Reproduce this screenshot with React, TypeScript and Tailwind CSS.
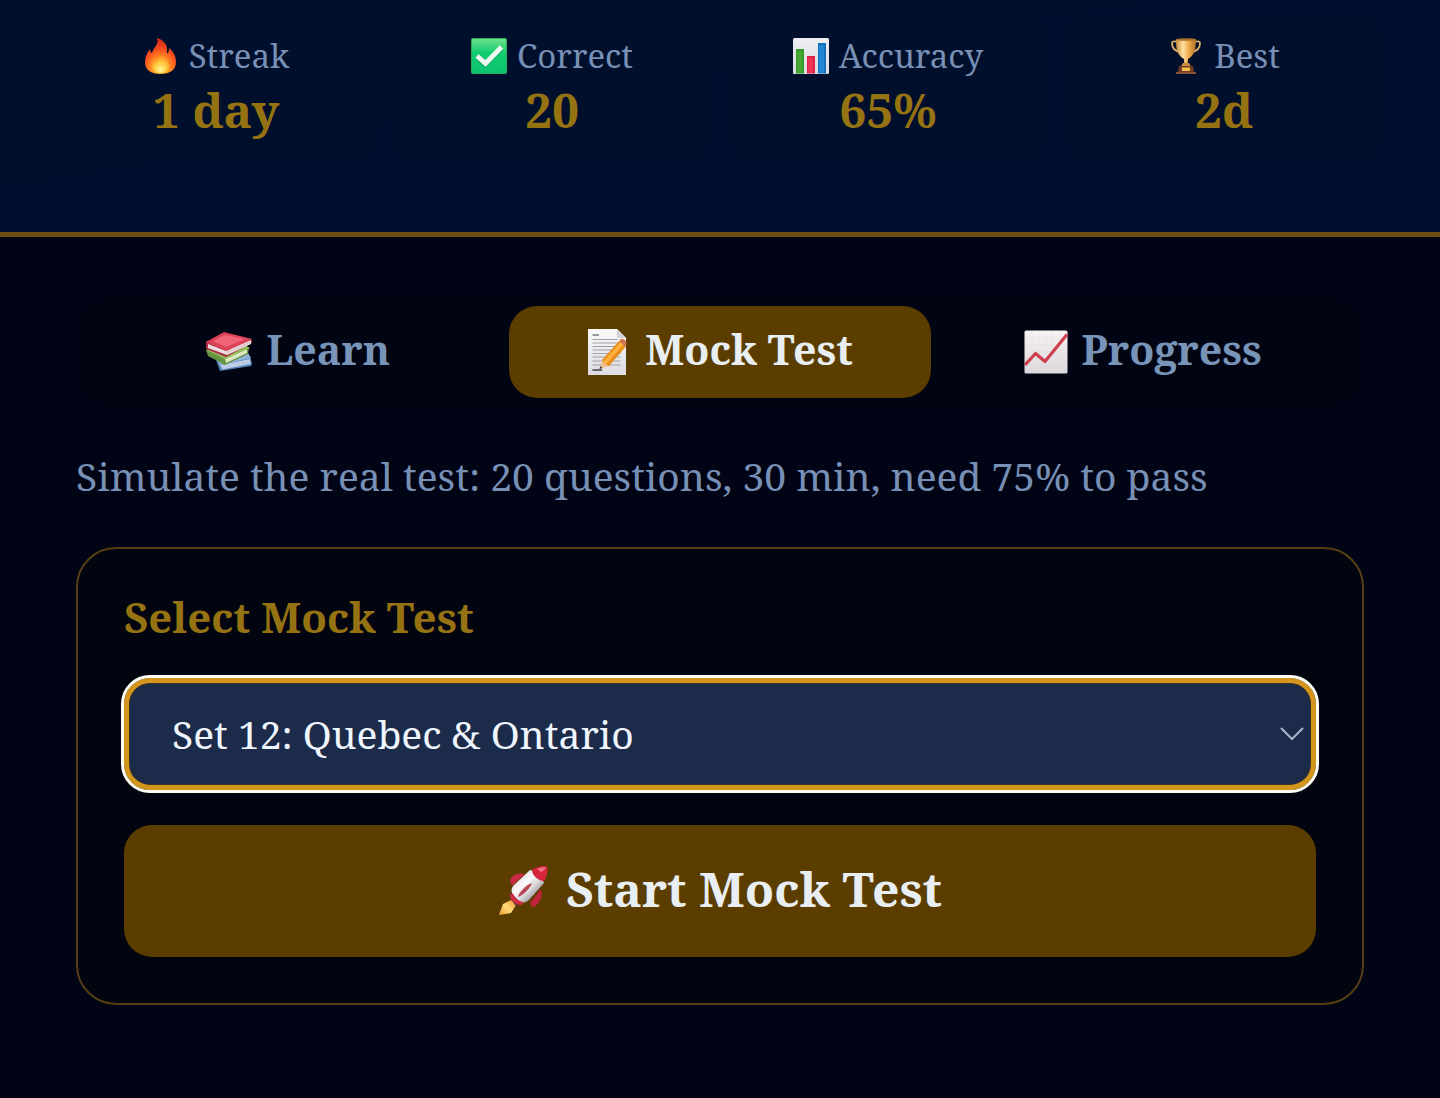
import { useState, type ReactNode } from "react";

function FireIcon() {
  return (
    <svg viewBox="0 0 36 40" className="h-10 w-9 shrink-0" aria-hidden="true">
      <defs>
        <radialGradient id="fire" cx="0.5" cy="0.85" r="0.75">
          <stop offset="0" stopColor="#ffd43b" />
          <stop offset="0.35" stopColor="#ff9a26" />
          <stop offset="0.7" stopColor="#fb511f" />
          <stop offset="1" stopColor="#d9301a" />
        </radialGradient>
        <radialGradient id="fireCore" cx="0.5" cy="0.85" r="0.75">
          <stop offset="0" stopColor="#fff59a" />
          <stop offset="0.5" stopColor="#ffc83b" />
          <stop offset="1" stopColor="#ff7a1c" />
        </radialGradient>
      </defs>
      <path fill="url(#fire)" d="M14 2c6 2 10 6 10 11 0 2-.3 3 .3 4.500 1-1 2-2.500 1.700-5.500 5 4 7 9 7 14 0 8-6 12-15.500 12S2 34 2 26c0-5 2-9 5-13 .5 3 1 4 2 4C10 12 16.500 8 14 2z" />
      <path fill="url(#fireCore)" d="M19 16c0 5 7 8 7 14 0 4-3 7-8.500 7S9 34 9 30c0-3 1-5 3-7 0 2 .5 3 1.500 4 0-5 5.500-6 5.500-11z" />
    </svg>
  );
}

function CheckIcon() {
  return (
    <svg viewBox="0 0 36 36" className="size-9 shrink-0" aria-hidden="true">
      <defs>
        <linearGradient id="check" x1="0" y1="0" x2="0" y2="1">
          <stop offset="0" stopColor="#6fe08c" />
          <stop offset="0.4" stopColor="#12cc70" />
          <stop offset="1" stopColor="#08c46d" />
        </linearGradient>
      </defs>
      <rect width="36" height="36" rx="2" fill="#2dae5c" />
      <rect x="1" y="1" width="34" height="34" rx="1" fill="url(#check)" />
      <path d="M6 19.500l8 7.500L30.500 10.500" fill="none" stroke="#0a9a58" strokeWidth="5" opacity="0.5" />
      <path d="M6 18l8.500 7.500L30.500 9" fill="none" stroke="#eef8f1" strokeWidth="4.800" />
    </svg>
  );
}

function BarsIcon() {
  return (
    <svg viewBox="0 0 36 36" className="size-9 shrink-0" aria-hidden="true">
      <defs>
        <linearGradient id="paper" x1="0" y1="0" x2="0" y2="1">
          <stop offset="0" stopColor="#eceef3" />
          <stop offset="1" stopColor="#dcdde3" />
        </linearGradient>
      </defs>
      <rect width="36" height="36" rx="1.500" fill="url(#paper)" />
      <rect x="3" y="11" width="8" height="24.500" fill="#339c27" />
      <rect x="4" y="13" width="5" height="22" fill="#45a835" />
      <rect x="14" y="18" width="8" height="17.500" fill="#dd2446" />
      <rect x="15" y="20" width="5" height="15" fill="#ee3459" />
      <rect x="25" y="5" width="8" height="30.500" fill="#1470bd" />
      <rect x="26" y="7" width="5" height="28" fill="#2286d2" />
    </svg>
  );
}

function TrophyIcon() {
  return (
    <svg viewBox="0 0 36 40" className="h-10 w-9 shrink-0" aria-hidden="true">
      <defs>
        <linearGradient id="cup" x1="0" y1="0" x2="1" y2="0">
          <stop offset="0" stopColor="#c98a3a" />
          <stop offset="0.35" stopColor="#ffe0a0" />
          <stop offset="0.65" stopColor="#eda848" />
          <stop offset="1" stopColor="#b06d25" />
        </linearGradient>
      </defs>
      <path d="M10 6c-3-1-6-1-6 1 0 5 3 8 8 9M26 6c3-1 6-1 6 1 0 5-3 8-8 9" fill="none" stroke="#d9ae6c" strokeWidth="1.800" />
      <path d="M8 3h20c0 10-1 16-8 20l-.5 6h-3l-.5-6C9 19 8 13 8 3z" fill="url(#cup)" />
      <ellipse cx="18" cy="3.500" rx="10" ry="1.300" fill="#a8702d" />
      <path d="M15 27h6l2 3H13z" fill="#c98a3c" />
      <path d="M11 30h14l1 6H10z" fill="#6d3a22" />
      <rect x="14" y="31.500" width="8" height="3.500" fill="#f3c04b" />
      <rect x="8" y="36" width="20" height="2" fill="#8a5138" />
    </svg>
  );
}

function BooksIcon() {
  return (
    <svg viewBox="0 0 48 42" className="h-11 w-12 shrink-0" aria-hidden="true">
      <path d="M11 29l4 11 31-5 1-2-2-8z" fill="#5585b8" />
      <path d="M15 34l30-6 .5 5-28 5.500z" fill="#bccce6" />
      <path d="M12 29l3 5 31-7-3-5z" fill="#8fb2dc" />
      <path d="M1 19l2 6 17 9 23-11 1-6z" fill="#659442" />
      <path d="M20 28l22-10v4L21 32z" fill="#dbe8c2" />
      <path d="M1 19l19 9 25-11-7-4z" fill="#93bb59" />
      <path d="M1 10v8l20 8 26-14-.5-4L21 17z" fill="#a8344b" />
      <path d="M3 13l18 7 25-11v4L22 24 3 17z" fill="#eedddd" />
      <path d="M22 21.500L46 11" stroke="#c8aeb4" strokeWidth="0.800" />
      <path d="M1 11L19 1l28 7-26 12z" fill="#dd4259" />
      <path d="M8 10L20 4l20 4-19 8z" fill="#ee6375" />
    </svg>
  );
}

function MemoIcon() {
  return (
    <svg viewBox="0 0 44 48" className="h-12 w-11 shrink-0" aria-hidden="true">
      <defs>
        <linearGradient id="memo" x1="0" y1="0" x2="0" y2="1">
          <stop offset="0" stopColor="#fafafa" />
          <stop offset="1" stopColor="#dddce2" />
        </linearGradient>
      </defs>
      <path d="M1 1h29l9 9v37H1z" fill="url(#memo)" />
      <path d="M30 1v9h9z" fill="#d3d3d8" />
      <path d="M5.500 7H12" stroke="#75787e" strokeWidth="1.500" />
      <path d="M5.500 11.500h25M5.500 15h28M5.500 18.500h28M5.500 22h28M5.500 25.500h28M5.500 29h28M5.500 33h28M5.500 37h28" stroke="#9da0a6" strokeWidth="1.100" />
      <path d="M5.500 42H15" stroke="#55575c" strokeWidth="1.800" />
      <path d="M12.500 41l2.500-9 6.500 6z" fill="#efc08b" />
      <path d="M12.500 41l.9-3 2.300 2z" fill="#424242" />
      <path d="M15 32l17-19 6.500 6-17 19.500z" fill="#e98d1c" />
      <path d="M16.500 33.500l16.500-19 3 2.500-16.500 19z" fill="#ffb13b" />
      <path d="M32 13l2-2c2-1 6 2 5.500 5l-1 3z" fill="#cf7650" />
    </svg>
  );
}

function TrendIcon() {
  return (
    <svg viewBox="0 0 44 44" className="size-11 shrink-0" aria-hidden="true">
      <defs>
        <linearGradient id="trend" x1="0" y1="0" x2="0" y2="1">
          <stop offset="0" stopColor="#f8f4f3" />
          <stop offset="1" stopColor="#dbd8dc" />
        </linearGradient>
      </defs>
      <rect x="0.500" y="0.500" width="43" height="43" rx="1.500" fill="url(#trend)" />
      <path d="M8 1v42M15 1v42M22 1v42M29 1v42M36 1v42M1 8h42M1 15h42M1 22h42M1 29h42M1 36h42" stroke="#e2dee0" strokeWidth="0.500" />
      <path d="M1 35l10.500-11.500L21 31.500 43 4.500" fill="none" stroke="#cf3f4f" strokeWidth="3.200" strokeLinejoin="round" />
    </svg>
  );
}

function RocketIcon() {
  return (
    <svg viewBox="0 0 52 52" className="size-13 shrink-0" aria-hidden="true">
      <defs>
        <linearGradient id="hull" x1="0.200" y1="0.200" x2="0.800" y2="0.800">
          <stop offset="0" stopColor="#e4dfe2" />
          <stop offset="0.350" stopColor="#fbf9f9" />
          <stop offset="0.650" stopColor="#dbd8dc" />
          <stop offset="1" stopColor="#8f8b92" />
        </linearGradient>
        <linearGradient id="flame" x1="1" y1="0" x2="0" y2="1">
          <stop offset="0" stopColor="#f08a2c" />
          <stop offset="0.500" stopColor="#ffdb7a" />
          <stop offset="1" stopColor="#e9a02d" />
        </linearGradient>
      </defs>
      <path d="M13 35L5 39 1 50l12-2 5-8z" fill="url(#flame)" />
      <path d="M27 9c-7-2-14 1-15 7 0 1 1 3 3 4z" fill="#c92a42" />
      <path d="M43 24c2 7-1 14-7 18-2 0-3-2-4-4z" fill="#c1233c" />
      <path d="M14 34l-1-7 10 1 2 11-8 1z" fill="#4a3348" />
      <path d="M13 25c-1 3 0 6 3 9s6 4 10 4l-3 2c-5 0-11-5-11-10z" fill="#d22c45" />
      <path d="M15 21L32 5c5 1 12 7 14 13L31 35c-3 3-7 3-10 1l-6-6c-2-3-2-6 0-9z" fill="url(#hull)" />
      <path d="M15 28c1 4 5 8 10 9l-3 2c-5 0-9-4-9-8z" fill="#d22c45" />
      <path d="M34 5c4-3 10-4.500 15-4 1 5 0 11-3 15-5 0-12-5-12-11z" fill="#d5263d" />
      <path d="M39 4c3-1.500 6-2 9-1.500-1 2-3 4-5 4.500z" fill="#ee7080" />
      <path d="M20 32c1-5 8-12 14-14-1 4-8 12-14 14z" fill="#b84756" />
    </svg>
  );
}

type Item = { label: string; icon: ReactNode };

const stats: (Item & { value: string })[] = [
  { label: "Streak", value: "1 day", icon: <FireIcon /> },
  { label: "Correct", value: "20", icon: <CheckIcon /> },
  { label: "Accuracy", value: "65%", icon: <BarsIcon /> },
  { label: "Best", value: "2d", icon: <TrophyIcon /> },
];

const tabs: Item[] = [
  { label: "Learn", icon: <BooksIcon /> },
  { label: "Mock Test", icon: <MemoIcon /> },
  { label: "Progress", icon: <TrendIcon /> },
];

export default function App() {
  const [active, setActive] = useState("Mock Test");

  return (
    <div className="min-h-screen bg-[#000414] font-['Noto_Serif','DejaVu_Serif',serif] text-[#7890b5]">
      <header className="border-b-5 border-[#6b4e14] bg-linear-to-br from-[#000d2b] to-[#000e2e] px-15 pt-4 pb-18">
        <dl className="grid grid-cols-4 gap-6">
          {stats.map((s) => (
            <div key={s.label} className="flex flex-col items-center rounded-3xl bg-[#000f2b] pt-4 pb-5">
              <dt className="flex h-12 items-center gap-2.5 text-[33px] leading-12">
                {s.icon}
                {s.label}
              </dt>
              <dd className="text-[48px] leading-15 font-bold text-[#957212]">{s.value}</dd>
            </div>
          ))}
        </dl>
      </header>

      <main className="px-19 pt-[59px]">
        <nav className="grid grid-cols-3 rounded-[36px] bg-[#000413] p-2.5" aria-label="Sections">
          {tabs.map((t) => (
            <button
              key={t.label}
              type="button"
              onClick={() => setActive(t.label)}
              aria-pressed={active === t.label}
              className={
                active === t.label
                  ? "flex h-23 items-center justify-center gap-3.5 rounded-[28px] bg-[#5c3d00] text-[41px] font-bold text-[#e8eef2]"
                  : "flex h-23 items-center justify-center gap-3.5 rounded-[28px] text-[41px] font-bold text-[#7894b8]"
              }
            >
              {t.icon}
              <span className="pb-1">{t.label}</span>
            </button>
          ))}
        </nav>

        <p className="mt-10 text-[39px] leading-14">Simulate the real test: 20 questions, 30 min, need 75% to pass</p>

        <section className="mt-[43px] rounded-[40px] border-2 border-[#544010] bg-[#020410] px-[46px] pt-10 pb-[46px]">
          <label htmlFor="mock-set" className="block text-[42px] leading-14 font-bold text-[#957212]">
            Select Mock Test
          </label>
          <div className="relative mt-[33px]">
            <select
              id="mock-set"
              defaultValue="12"
              className="block h-28 w-full appearance-none rounded-[26px] border-5 border-[#d3951c] bg-[#1b2b49] pr-20 pl-[43px] text-[39px] text-[#f0f6ff] inset-ring-1 inset-ring-[#3a3428] outline-3 outline-[#fffdf4]"
            >
              <option value="12">Set 12: Quebec &amp; Ontario</option>
            </select>
            <svg viewBox="0 0 24 14" className="pointer-events-none absolute top-[49px] right-3 h-3.5 w-6" aria-hidden="true">
              <path d="M1 1l11 11L23 1" fill="none" stroke="#a9b5ca" strokeWidth="2" />
            </svg>
          </div>
          <button
            type="button"
            className="mt-[35px] flex h-33 w-full items-center justify-center gap-4 rounded-[28px] bg-[#5c3d00] text-[48px] font-bold text-[#e8eef2]"
          >
            <RocketIcon />
            <span className="pb-1">Start Mock Test</span>
          </button>
        </section>
      </main>
    </div>
  );
}
